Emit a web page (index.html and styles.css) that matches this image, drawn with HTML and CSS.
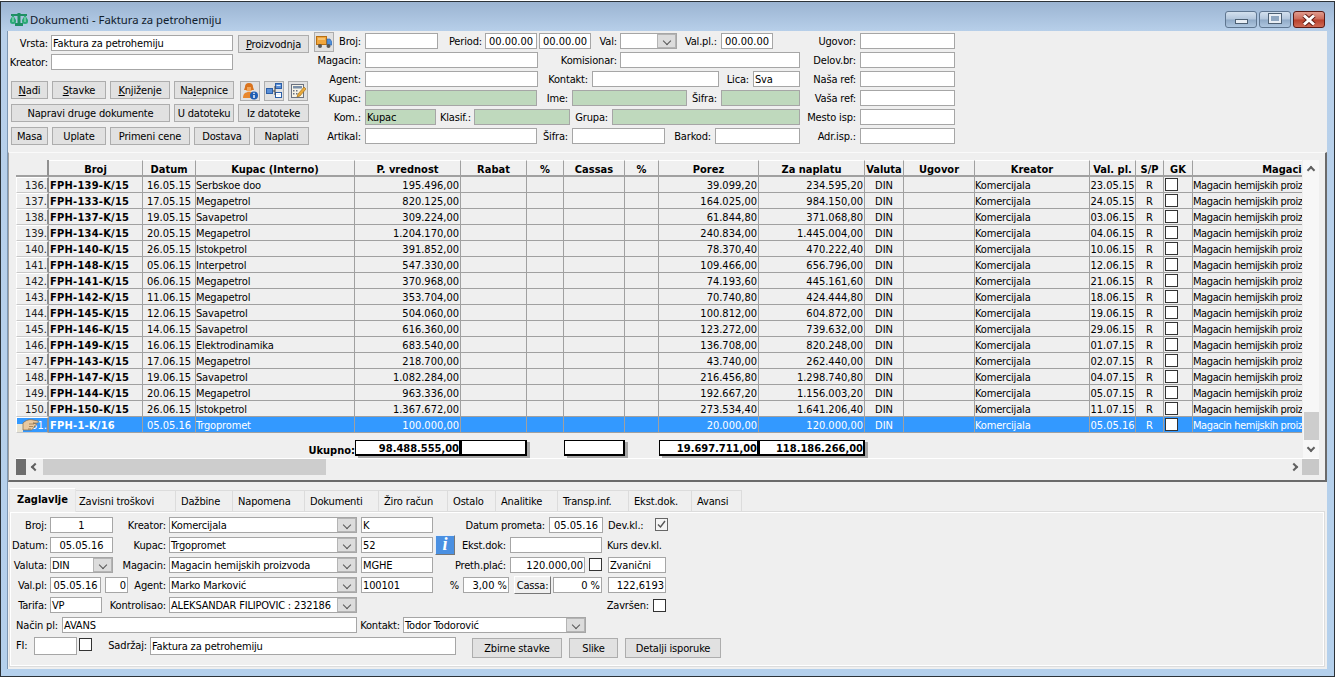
FILE: index.html
```html
<!DOCTYPE html>
<html lang="en">
<head>
    <meta charset="UTF-8">
    <title>Dokumenti - Faktura za petrohemiju</title>
    <link rel="stylesheet" href="styles.css">
</head>
<body>
<div class="window">
    <div class="titlebar">
        <svg class="app-icon" width="18" height="14" viewBox="0 0 18 14"><path d="M7.5 0h3v10h2.5v3H5v-3h2.5z" fill="#1f8f63"/><path d="M1 1h16v2H1z" fill="#1f8f63"/><path d="M0 7l3-5 3 5v1.5a3 2.5 0 0 1-6 0zM12 7l3-5 3 5v1.5a3 2.5 0 0 1-6 0z" fill="#2aa876"/><path d="M3 4v5M15 4v5" stroke="#a8e4c8"/></svg>
        <span class="title-text">Dokumenti - Faktura za petrohemiju</span>
        <div class="win-buttons">
            <div class="win-btn"><span class="glyph-min"></span></div>
            <div class="win-btn"><span class="glyph-max"></span></div>
            <div class="win-btn win-close"><svg width="16" height="12" viewBox="0 0 16 12"><path d="M3 1.5l10 9M13 1.5l-10 9" stroke="#5c1a14" stroke-width="4.8"/><path d="M3 1.5l10 9M13 1.5l-10 9" stroke="#fff" stroke-width="3"/></svg></div>
        </div>
    </div>

    <div class="client">
        <div class="top-panel">
            <div class="top-left">
                <div class="row tl-row"><div class="lbl lbl-near">Vrsta:</div><div class="field">Faktura za petrohemiju</div><div class="btn"><u>P</u>roizvodnja</div></div>
                <div class="row tl-row"><div class="lbl lbl-near">Kreator:</div><div class="field"></div></div>
                <div class="btn-row b1">
                    <div class="btn"><u>N</u>ađi</div><div class="btn"><u>S</u>tavke</div><div class="btn"><u>K</u>njiženje</div><div class="btn">Na<u>l</u>epnice</div>
                    <div class="btn icon-btn">
                        <svg width="16" height="17" viewBox="0 0 16 17"><circle cx="7" cy="5" r="3.6" fill="#f2a65a"/><path d="M3 4a4 4 0 0 1 8 0l1 3H9V4H5v3H2z" fill="#d9731d"/><path d="M1 15c0-4 2-6 6-6s6 2 6 6z" fill="#e8872c"/><circle cx="12" cy="12.5" r="4" fill="#1f5fb4"/><path d="M11.3 9.8h1.4v1.2h-1.4zM11.3 12h1.4v3h-1.4z" fill="#fff"/></svg>
                    </div>
                    <div class="btn icon-btn">
                        <svg width="16" height="16" viewBox="0 0 16 16"><rect x="0.5" y="5.5" width="6" height="5" fill="#5b8fd6" stroke="#2c5fa8"/><rect x="9.5" y="0.5" width="6" height="5" fill="#5b8fd6" stroke="#2c5fa8"/><rect x="9.5" y="9.5" width="6" height="5" fill="#fff" stroke="#2c5fa8"/><path d="M7 8h2M9 3v9" stroke="#444"/><path d="M10.5 2.5h4M10.5 11.5h4" stroke="#dfeaf8"/></svg>
                    </div>
                    <div class="btn icon-btn">
                        <svg width="16" height="16" viewBox="0 0 16 16"><rect x="1.5" y="1.5" width="12" height="13" fill="#f7f3e6" stroke="#6b7280"/><rect x="3" y="3" width="9" height="2.5" fill="#7b8fa8"/><path d="M3 7h1.5v1.5H3zM6 7h1.5v1.5H6zM3 10h1.5v1.5H3zM6 10h1.5v1.5H6z" fill="#6b7280"/><path d="M7 14l1-3 6-7 2 2-6 7z" fill="#e9a93a" stroke="#9a6a14" stroke-width="0.6"/></svg>
                    </div>
                </div>
                <div class="btn-row b2"><div class="btn">Napravi druge dokumente</div><div class="btn">U datoteku</div><div class="btn">Iz datoteke</div></div>
                <div class="btn-row b3"><div class="btn">Masa</div><div class="btn">Uplate</div><div class="btn">Primeni cene</div><div class="btn">Dostava</div><div class="btn">Naplati</div></div>
            </div>

            <div class="top-right">
                <div class="row f1">
                    <div class="btn truck-btn"><svg width="16" height="14" viewBox="0 0 16 14"><rect x="0.5" y="1.5" width="10" height="8" fill="#f0a63c" stroke="#b86f12"/><path d="M2 4h7" stroke="#fbe0a8"/><path d="M11 4h3l2 3v3h-5z" fill="#4f8fd8" stroke="#2c5fa8" stroke-width="0.6"/><circle cx="4" cy="11" r="2" fill="#555"/><circle cx="12.5" cy="11" r="2" fill="#555"/></svg></div>
                    <div class="lbl">Broj:</div><div class="field"></div>
                    <div class="lbl lbl-near">Period:</div><div class="field mid">00.00.00</div><div class="field mid period-to">00.00.00</div>
                    <div class="lbl lbl-near">Val:</div><div class="combo"><span class="combo-text"></span><b class="drop"></b></div>
                    <div class="lbl">Val.pl.:</div><div class="field mid">00.00.00</div>
                    <div class="lbl">Ugovor:</div><div class="field"></div>
                </div>
                <div class="row f2">
                    <div class="lbl">Magacin:</div><div class="field"></div>
                    <div class="lbl lbl-near">Komisionar:</div><div class="field"></div>
                    <div class="lbl">Delov.br:</div><div class="field"></div>
                </div>
                <div class="row f3">
                    <div class="lbl">Agent:</div><div class="field"></div>
                    <div class="lbl">Kontakt:</div><div class="field"></div>
                    <div class="lbl">Lica:</div><div class="field">Sva</div>
                    <div class="lbl">Naša ref:</div><div class="field"></div>
                </div>
                <div class="row f4">
                    <div class="lbl">Kupac:</div><div class="field green"></div>
                    <div class="lbl">Ime:</div><div class="field green"></div>
                    <div class="lbl">Šifra:</div><div class="field green"></div>
                    <div class="lbl">Vaša ref:</div><div class="field"></div>
                </div>
                <div class="row f5">
                    <div class="lbl">Kom.:</div><div class="field green">Kupac</div>
                    <div class="lbl lbl-near">Klasif.:</div><div class="field green"></div>
                    <div class="lbl">Grupa:</div><div class="field green"></div>
                    <div class="lbl">Mesto isp:</div><div class="field"></div>
                </div>
                <div class="row f6">
                    <div class="lbl">Artikal:</div><div class="field"></div>
                    <div class="lbl">Šifra:</div><div class="field"></div>
                    <div class="lbl">Barkod:</div><div class="field"></div>
                    <div class="lbl">Adr.isp.:</div><div class="field"></div>
                </div>
            </div>
        </div>

        <div class="grid-panel">
            <div class="grid-main">
                <div class="grid-left">
                    <div class="table-clip">
                        <table class="doc-table">
                            <colgroup>
                                <col class="c-num"><col class="c-broj"><col class="c-datum"><col class="c-kupac"><col class="c-pv"><col class="c-rabat"><col class="c-pct"><col class="c-cassas"><col class="c-pct2"><col class="c-porez"><col class="c-zn"><col class="c-val"><col class="c-ugovor"><col class="c-kreator"><col class="c-valpl"><col class="c-sp"><col class="c-gk"><col class="c-mag">
                            </colgroup>
                            <thead>
                                <tr><th class="rh"></th><th>Broj</th><th>Datum</th><th>Kupac (Interno)</th><th>P. vrednost</th><th>Rabat</th><th>%</th><th>Cassas</th><th>%</th><th>Porez</th><th>Za naplatu</th><th>Valuta</th><th>Ugovor</th><th>Kreator</th><th>Val. pl.</th><th>S/P</th><th>GK</th><th>Magacin</th></tr>
                            </thead>
                            <tbody>
                                <tr><td class="rh">136.</td><td class="bold">FPH-139-K/15</td><td class="mid">16.05.15</td><td>Serbskoe doo</td><td class="num">195.496,00</td><td></td><td></td><td></td><td></td><td class="num">39.099,20</td><td class="num">234.595,20</td><td class="mid">DIN</td><td></td><td>Komercijala</td><td class="mid">23.05.15</td><td class="mid">R</td><td class="chk-cell"><span class="check"></span></td><td>Magacin hemijskih proizvoda</td></tr>
                                <tr><td class="rh">137.</td><td class="bold">FPH-133-K/15</td><td class="mid">17.05.15</td><td>Megapetrol</td><td class="num">820.125,00</td><td></td><td></td><td></td><td></td><td class="num">164.025,00</td><td class="num">984.150,00</td><td class="mid">DIN</td><td></td><td>Komercijala</td><td class="mid">24.05.15</td><td class="mid">R</td><td class="chk-cell"><span class="check"></span></td><td>Magacin hemijskih proizvoda</td></tr>
                                <tr><td class="rh">138.</td><td class="bold">FPH-137-K/15</td><td class="mid">19.05.15</td><td>Savapetrol</td><td class="num">309.224,00</td><td></td><td></td><td></td><td></td><td class="num">61.844,80</td><td class="num">371.068,80</td><td class="mid">DIN</td><td></td><td>Komercijala</td><td class="mid">03.06.15</td><td class="mid">R</td><td class="chk-cell"><span class="check"></span></td><td>Magacin hemijskih proizvoda</td></tr>
                                <tr><td class="rh">139.</td><td class="bold">FPH-134-K/15</td><td class="mid">20.05.15</td><td>Megapetrol</td><td class="num">1.204.170,00</td><td></td><td></td><td></td><td></td><td class="num">240.834,00</td><td class="num">1.445.004,00</td><td class="mid">DIN</td><td></td><td>Komercijala</td><td class="mid">04.06.15</td><td class="mid">R</td><td class="chk-cell"><span class="check"></span></td><td>Magacin hemijskih proizvoda</td></tr>
                                <tr><td class="rh">140.</td><td class="bold">FPH-140-K/15</td><td class="mid">26.05.15</td><td>Istokpetrol</td><td class="num">391.852,00</td><td></td><td></td><td></td><td></td><td class="num">78.370,40</td><td class="num">470.222,40</td><td class="mid">DIN</td><td></td><td>Komercijala</td><td class="mid">10.06.15</td><td class="mid">R</td><td class="chk-cell"><span class="check"></span></td><td>Magacin hemijskih proizvoda</td></tr>
                                <tr><td class="rh">141.</td><td class="bold">FPH-148-K/15</td><td class="mid">05.06.15</td><td>Interpetrol</td><td class="num">547.330,00</td><td></td><td></td><td></td><td></td><td class="num">109.466,00</td><td class="num">656.796,00</td><td class="mid">DIN</td><td></td><td>Komercijala</td><td class="mid">12.06.15</td><td class="mid">R</td><td class="chk-cell"><span class="check"></span></td><td>Magacin hemijskih proizvoda</td></tr>
                                <tr><td class="rh">142.</td><td class="bold">FPH-141-K/15</td><td class="mid">06.06.15</td><td>Megapetrol</td><td class="num">370.968,00</td><td></td><td></td><td></td><td></td><td class="num">74.193,60</td><td class="num">445.161,60</td><td class="mid">DIN</td><td></td><td>Komercijala</td><td class="mid">21.06.15</td><td class="mid">R</td><td class="chk-cell"><span class="check"></span></td><td>Magacin hemijskih proizvoda</td></tr>
                                <tr><td class="rh">143.</td><td class="bold">FPH-142-K/15</td><td class="mid">11.06.15</td><td>Megapetrol</td><td class="num">353.704,00</td><td></td><td></td><td></td><td></td><td class="num">70.740,80</td><td class="num">424.444,80</td><td class="mid">DIN</td><td></td><td>Komercijala</td><td class="mid">18.06.15</td><td class="mid">R</td><td class="chk-cell"><span class="check"></span></td><td>Magacin hemijskih proizvoda</td></tr>
                                <tr><td class="rh">144.</td><td class="bold">FPH-145-K/15</td><td class="mid">12.06.15</td><td>Savapetrol</td><td class="num">504.060,00</td><td></td><td></td><td></td><td></td><td class="num">100.812,00</td><td class="num">604.872,00</td><td class="mid">DIN</td><td></td><td>Komercijala</td><td class="mid">19.06.15</td><td class="mid">R</td><td class="chk-cell"><span class="check"></span></td><td>Magacin hemijskih proizvoda</td></tr>
                                <tr><td class="rh">145.</td><td class="bold">FPH-146-K/15</td><td class="mid">14.06.15</td><td>Savapetrol</td><td class="num">616.360,00</td><td></td><td></td><td></td><td></td><td class="num">123.272,00</td><td class="num">739.632,00</td><td class="mid">DIN</td><td></td><td>Komercijala</td><td class="mid">29.06.15</td><td class="mid">R</td><td class="chk-cell"><span class="check"></span></td><td>Magacin hemijskih proizvoda</td></tr>
                                <tr><td class="rh">146.</td><td class="bold">FPH-149-K/15</td><td class="mid">16.06.15</td><td>Elektrodinamika</td><td class="num">683.540,00</td><td></td><td></td><td></td><td></td><td class="num">136.708,00</td><td class="num">820.248,00</td><td class="mid">DIN</td><td></td><td>Komercijala</td><td class="mid">01.07.15</td><td class="mid">R</td><td class="chk-cell"><span class="check"></span></td><td>Magacin hemijskih proizvoda</td></tr>
                                <tr><td class="rh">147.</td><td class="bold">FPH-143-K/15</td><td class="mid">17.06.15</td><td>Megapetrol</td><td class="num">218.700,00</td><td></td><td></td><td></td><td></td><td class="num">43.740,00</td><td class="num">262.440,00</td><td class="mid">DIN</td><td></td><td>Komercijala</td><td class="mid">02.07.15</td><td class="mid">R</td><td class="chk-cell"><span class="check"></span></td><td>Magacin hemijskih proizvoda</td></tr>
                                <tr><td class="rh">148.</td><td class="bold">FPH-147-K/15</td><td class="mid">19.06.15</td><td>Savapetrol</td><td class="num">1.082.284,00</td><td></td><td></td><td></td><td></td><td class="num">216.456,80</td><td class="num">1.298.740,80</td><td class="mid">DIN</td><td></td><td>Komercijala</td><td class="mid">04.07.15</td><td class="mid">R</td><td class="chk-cell"><span class="check"></span></td><td>Magacin hemijskih proizvoda</td></tr>
                                <tr><td class="rh">149.</td><td class="bold">FPH-144-K/15</td><td class="mid">20.06.15</td><td>Megapetrol</td><td class="num">963.336,00</td><td></td><td></td><td></td><td></td><td class="num">192.667,20</td><td class="num">1.156.003,20</td><td class="mid">DIN</td><td></td><td>Komercijala</td><td class="mid">05.07.15</td><td class="mid">R</td><td class="chk-cell"><span class="check"></span></td><td>Magacin hemijskih proizvoda</td></tr>
                                <tr><td class="rh">150.</td><td class="bold">FPH-150-K/15</td><td class="mid">26.06.15</td><td>Istokpetrol</td><td class="num">1.367.672,00</td><td></td><td></td><td></td><td></td><td class="num">273.534,40</td><td class="num">1.641.206,40</td><td class="mid">DIN</td><td></td><td>Komercijala</td><td class="mid">11.07.15</td><td class="mid">R</td><td class="chk-cell"><span class="check"></span></td><td>Magacin hemijskih proizvoda</td></tr>
                                <tr class="selected"><td class="rh">151.<svg class="hand" width="22" height="13" viewBox="0 0 22 13"><path d="M0 5h6v8H0z" fill="#e8e4d4"/><path d="M6 4c3-3 7-4 10-3l5 1c1 1 0 2-1 2h-4l3 1c1 1 0 2-1 2l-1 0c1 1 0 2-1 2 0 1-1 2-2 2H9L6 11z" fill="#e9c9a0" stroke="#8a6a44" stroke-width="0.7"/><path d="M12 5h5M12 7.5h4M11 10h3" stroke="#8a6a44" stroke-width="0.7"/></svg></td><td class="bold">FPH-1-K/16</td><td class="mid">05.05.16</td><td>Trgopromet</td><td class="num">100.000,00</td><td></td><td></td><td></td><td></td><td class="num">20.000,00</td><td class="num">120.000,00</td><td class="mid">DIN</td><td></td><td>Komercijala</td><td class="mid">05.05.16</td><td class="mid">R</td><td class="chk-cell"><span class="check"></span></td><td>Magacin hemijskih proizvoda</td></tr>
                            </tbody>
                        </table>
                    </div>
                    <div class="totals">
                        <div class="tot-label">Ukupno:</div>
                        <div class="tot-box">98.488.555,00</div>
                        <div class="tot-box"></div>
                        <div></div>
                        <div class="tot-box"></div>
                        <div></div>
                        <div class="tot-box">19.697.711,00</div>
                        <div class="tot-box">118.186.266,00</div>
                    </div>
                </div>
                <div class="vscroll">
                    <span class="arrow arrow-up"></span>
                    <div class="vspace"></div>
                    <div class="vthumb"></div>
                    <span class="arrow arrow-down"></span>
                </div>
            </div>
            <div class="hscroll">
                <div class="h-stub"></div>
                <div class="h-btn"><span class="arrow arrow-left"></span></div>
                <div class="h-thumb"></div>
                <div class="h-space"></div>
                <div class="h-btn"><span class="arrow arrow-right"></span></div>
                <div class="h-corner"></div>
            </div>
        </div>

        <div class="tabs">
            <div class="tab active">Zaglavlje</div>
            <div class="tab t-zav">Zavisni troškovi</div>
            <div class="tab t-daz">Dažbine</div>
            <div class="tab t-nap">Napomena</div>
            <div class="tab t-dok">Dokumenti</div>
            <div class="tab t-zir">Žiro račun</div>
            <div class="tab t-ost">Ostalo</div>
            <div class="tab t-ana">Analitike</div>
            <div class="tab t-tra">Transp.inf.</div>
            <div class="tab t-eks">Ekst.dok.</div>
            <div class="tab t-ava">Avansi</div>
        </div>

        <div class="tab-page">
            <div class="row z1">
                <div class="lbl lbl-near">Broj:</div><div class="field mid">1</div>
                <div class="lbl lbl-near">Kreator:</div><div class="combo"><span class="combo-text">Komercijala</span><b class="drop"></b></div>
                <span></span><div class="field">K</div>
                <div class="lbl">Datum prometa:</div><div class="field mid">05.05.16</div>
                <div class="lbl-left">Dev.kl.:</div><div class="check checked"><svg width="11" height="11" viewBox="0 0 11 11"><path d="M2 5.5l2.5 2.5L9 2" fill="none" stroke="#555" stroke-width="1.4"/></svg></div>
            </div>
            <div class="row z2">
                <div class="lbl lbl-near">Datum:</div><div class="field mid">05.05.16</div>
                <div class="lbl lbl-near">Kupac:</div><div class="combo"><span class="combo-text">Trgopromet</span><b class="drop"></b></div>
                <span></span><div class="field">52</div>
                <span></span><div class="info-btn">i</div>
                <div class="lbl">Ekst.dok:</div><div class="field"></div>
                <div class="lbl-left">Kurs dev.kl.</div>
            </div>
            <div class="row z3">
                <div class="lbl lbl-near">Valuta:</div><div class="combo"><span class="combo-text">DIN</span><b class="drop"></b></div>
                <div class="lbl lbl-near">Magacin:</div><div class="combo"><span class="combo-text">Magacin hemijskih proizvoda</span><b class="drop"></b></div>
                <span></span><div class="field">MGHE</div>
                <div class="lbl">Preth.plać:</div><div class="field num">120.000,00</div>
                <span></span><div class="check"></div>
                <span></span><div class="field">Zvanični</div>
            </div>
            <div class="row z4">
                <div class="lbl lbl-near">Val.pl:</div><div class="field mid">05.05.16</div>
                <span></span><div class="field num">0</div>
                <div class="lbl lbl-near">Agent:</div><div class="combo"><span class="combo-text">Marko Marković</span><b class="drop"></b></div>
                <span></span><div class="field">100101</div>
                <div class="lbl">%</div><div class="field num">3,00 %</div>
                <span></span><div class="btn raised">Cassa:</div>
                <span></span><div class="field num">0 %</div>
                <span></span><div class="field num">122,6193</div>
            </div>
            <div class="row z5">
                <div class="lbl lbl-near">Tarifa:</div><div class="field">VP</div>
                <div class="lbl lbl-near">Kontrolisao:</div><div class="combo"><span class="combo-text">ALEKSANDAR FILIPOVIC : 232186</span><b class="drop"></b></div>
                <div class="lbl">Završen:</div><div class="check low"></div>
            </div>
            <div class="row z6">
                <div class="lbl">Način pl:</div><div class="field">AVANS</div>
                <div class="lbl lbl-near">Kontakt:</div><div class="combo"><span class="combo-text">Todor Todorović</span><b class="drop"></b></div>
            </div>
            <div class="row z7">
                <div class="lbl lbl-left-f">FI:</div><div class="field tall"></div>
                <span></span><div class="check"></div>
                <div class="lbl lbl-near">Sadržaj:</div><div class="field tall">Faktura za petrohemiju</div>
                <span></span><div class="btn big">Zbirne stavke</div>
                <span></span><div class="btn big">Slike</div>
                <span></span><div class="btn big">Detalji isporuke</div>
            </div>
        </div>
    </div>
</div>
</body>
</html>
```

FILE: styles.css
```css
* {
    margin: 0;
    padding: 0;
    box-sizing: border-box;
}

body {
    font-family: "DejaVu Sans Condensed", "DejaVu Sans", sans-serif;
    font-size: 11px;
    letter-spacing: -0.16px;
    color: #000;
    background: #fff;
    width: 1335px;
    height: 677px;
    overflow: hidden;
    padding-top: 1px;
}

.window {
    width: 1335px;
    height: 676px;
    border: 1px solid #2b3238;
    background: linear-gradient(to bottom, #9bb4d2 0, #b8d0ea 30px, #b4d0ec 100%);
    padding: 0 7px 7px 6px;
    display: flex;
    flex-direction: column;
}

.titlebar {
    height: 29px;
    flex: none;
    display: flex;
    align-items: center;
    padding-left: 3px;
    position: relative;
}

.app-icon {
    margin-top: 6px;
    flex: none;
}

.title-text {
    font-family: "Noto Sans", sans-serif;
    font-size: 11.3px;
    letter-spacing: 0;
    margin-left: 2px;
    margin-top: 5px;
    color: #10202c;
}

.win-buttons {
    margin-left: auto;
    margin-right: 2px;
    margin-top: 6px;
    display: flex;
    gap: 2px;
}

.win-btn {
    width: 32px;
    height: 17px;
    border: 1px solid #5f7690;
    border-radius: 3px;
    background: linear-gradient(to bottom, #d3e0ee 0, #b2c6dc 48%, #8fa9c6 52%, #aec6df 100%);
    display: flex;
    align-items: center;
    justify-content: center;
}

.win-close {
    border-color: #5c1a14;
    background: linear-gradient(to bottom, #e09b8e 0, #cc6a58 48%, #b8402c 52%, #cf6a55 100%);
}

.glyph-min {
    width: 13px;
    height: 5px;
    margin-top: 4px;
    background: #e8eef5;
    border: 1px solid #4d6073;
}

.glyph-max {
    width: 12px;
    height: 9px;
    border: 2px solid #e8eef5;
    background: #8ea6c0;
    box-shadow: 0 0 0 1px #4d6073;
    margin-top: -2px;
}

.client {
    flex: 1;
    min-height: 0;
    background: #efefef;
    border-left: 1px solid #7d97b3;
    display: flex;
    flex-direction: column;
}

/* top filter panel */
.top-panel {
    height: 121px;
    flex: none;
    display: flex;
}

.top-left {
    width: 306px;
    padding-top: 4px;
    flex: none;
}

.top-right {
    padding-top: 2px;
}

.row {
    display: grid;
    height: 16px;
    margin-bottom: 3px;
    white-space: nowrap;
}

.lbl {
    text-align: right;
    padding-right: 4px;
    line-height: 17px;
}

.lbl-near {
    padding-right: 3px;
}

.lbl-left {
    padding-left: 5px;
    line-height: 17px;
}

.field {
    height: 16px;
    border: 1px solid #a6a6a6;
    background: #fff;
    line-height: 16px;
    padding: 0 1px;
    overflow: hidden;
    white-space: nowrap;
}

.field.green {
    background: #bfd9bd;
}

.field.mid {
    text-align: center;
    letter-spacing: 0;
}

.field.num {
    text-align: right;
    letter-spacing: 0;
}

.field.tall {
    height: 18px;
    line-height: 18px;
}

.period-to {
    margin-left: 2px;
}

.combo {
    height: 16px;
    border: 1px solid #a6a6a6;
    background: #fff;
    display: flex;
    line-height: 16px;
    overflow: hidden;
}

.combo-text {
    flex: 1;
    padding-left: 1px;
    white-space: nowrap;
    overflow: hidden;
}

.drop {
    width: 19px;
    flex: none;
    background: #dcdcdc;
    border: 1px solid #b4b4b4;
    position: relative;
}

.drop::after {
    content: "";
    position: absolute;
    left: 6px;
    top: 3px;
    width: 5px;
    height: 5px;
    border-right: 1px solid #555;
    border-bottom: 1px solid #555;
    transform: rotate(45deg);
}

.btn {
    height: 18px;
    border: 1px solid #adadad;
    background: #e1e1e1;
    text-align: center;
    line-height: 18px;
    white-space: nowrap;
}

.tl-row {
    grid-template-columns: 43px 182px 76px;
}

.tl-row .btn {
    margin-left: 5px;
}

.btn-row {
    display: grid;
    column-gap: 4px;
    height: 18px;
    margin-left: 3px;
    margin-bottom: 5px;
}

.b1 {
    grid-template-columns: 37px 54px 60px 60px 22px 20px 20px;
    margin-top: 11px;
}

.b2 {
    grid-template-columns: 159px 60px 71px;
}

.b3 {
    grid-template-columns: 37px 54px 80px 56px 55px;
}

.icon-btn {
    width: 20px;
    height: 20px;
    justify-self: end;
    display: flex;
    align-items: center;
    justify-content: center;
}

.truck-btn {
    width: 20px;
    height: 20px;
    margin-top: -1px;
    display: flex;
    align-items: center;
    justify-content: center;
}

.f1 { grid-template-columns: 20px 31px 73px 47px 52px 54px 29px 57px 44px 52px 87px 95px; }
.f2 { grid-template-columns: 51px 173px 82px 180px 60px 95px; }
.f3 { grid-template-columns: 51px 173px 54px 127px 34px 47px 60px 95px; }
.f4 { grid-template-columns: 51px 172px 35px 115px 34px 79px 60px 95px; }
.f5 { grid-template-columns: 51px 71px 38px 96px 42px 188px 60px 95px; }
.f6 { grid-template-columns: 51px 172px 35px 93px 50px 85px 60px 95px; }

/* document grid */
.grid-panel {
    flex: none;
    border-top: 1px solid #fafafa;
    border-left: 1px solid #a0a0a0;
    border-right: 2px solid #6a6a6a;
    border-bottom: 2px solid #6a6a6a;
    padding: 7px 5px 5px 7px;
}

.grid-main {
    display: flex;
    height: 298px;
}

.grid-left {
    width: 1286px;
    flex: none;
}

.table-clip {
    width: 1286px;
    height: 273px;
    overflow: hidden;
}

.doc-table {
    width: 1363px;
    table-layout: fixed;
    border-collapse: separate;
    border-spacing: 0;
}

.c-num { width: 33px; }
.c-broj { width: 94px; }
.c-datum { width: 53px; }
.c-kupac { width: 159px; }
.c-pv { width: 106px; }
.c-rabat { width: 66px; }
.c-pct { width: 37px; }
.c-cassas { width: 61px; }
.c-pct2 { width: 34px; }
.c-porez { width: 100px; }
.c-zn { width: 106px; }
.c-val { width: 39px; }
.c-ugovor { width: 71px; }
.c-kreator { width: 115px; }
.c-valpl { width: 46px; }
.c-sp { width: 28px; }
.c-gk { width: 29px; }
.c-mag { width: 186px; }

.doc-table th {
    height: 17px;
    font-weight: bold;
    letter-spacing: 0;
    text-align: center;
    background: #f0f0f0;
    border-top: 1px solid #fff;
    border-right: 1px solid #a0a0a0;
    border-bottom: 2px solid #a0a0a0;
    line-height: 11px;
    padding: 3px 0 0;
    white-space: nowrap;
    overflow: hidden;
}

.doc-table th.rh {
    background: #efefef;
    border-top: none;
    border-bottom: 2px solid #a0a0a0;
    border-right: 2px solid #909090;
}

.doc-table td {
    height: 16px;
    border-right: 1px solid #a0a0a0;
    border-bottom: 1px solid #a0a0a0;
    padding: 2px 1px 0 0;
    line-height: 13px;
    white-space: nowrap;
    overflow: hidden;
}

.doc-table td:last-child {
    letter-spacing: -0.42px;
}

.doc-table td.rh {
    text-align: right;
    padding: 1px 0 0;
    background: #efefef;
    color: #222;
    letter-spacing: 0;
    border-top: 1px solid #fff;
    border-left: 1px solid #fff;
    border-right: 2px solid #909090;
    border-bottom: 1px solid #c8c8c8;
    position: relative;
    line-height: 13px;
}

.doc-table td.bold {
    font-weight: bold;
    letter-spacing: 0.25px;
    padding-left: 1px;
}

.doc-table td.mid {
    text-align: center;
    letter-spacing: 0;
    padding-right: 0;
}

.doc-table td.num {
    text-align: right;
    letter-spacing: 0;
}

.doc-table td.chk-cell {
    vertical-align: top;
    padding: 0;
}

.check {
    display: block;
    width: 13px;
    height: 13px;
    background: #fff;
    border: 1px solid #333;
    margin-top: 1px;
}

.chk-cell .check {
    margin: 1px 0 0 1px;
}

.check.checked {
    border-color: #666;
    display: flex;
    align-items: center;
    justify-content: center;
    background: #f4f4f4;
}

.check.low {
    margin-top: 2px;
}

.selected td {
    background: #3399ff;
    color: #fff;
}

.doc-table .selected td.rh {
    background: #3399ff;
    color: #fff;
}

.hand {
    position: absolute;
    left: 0;
    top: 1px;
}

.totals {
    display: grid;
    grid-template-columns: 339px 106px 66px 37px 61px 34px 100px 106px;
    height: 16px;
    margin-top: 7px;
    font-weight: bold;
    letter-spacing: 0;
}

.tot-label {
    text-align: right;
    line-height: 21px;
    white-space: nowrap;
}

.tot-box {
    height: 16px;
    background: #fff;
    border: 1px solid #000;
    border-right-width: 2px;
    border-bottom-width: 2px;
    box-shadow: 3px 2px 0 #a8a8a8;
    text-align: right;
    line-height: 15px;
    white-space: nowrap;
}

.vscroll {
    width: 16px;
    margin-left: 1px;
    background: #f7f7f7;
    display: flex;
    flex-direction: column;
    align-items: center;
    flex: none;
}

.vspace {
    flex: 1;
}

.vthumb {
    width: 15px;
    height: 28px;
    background: #cdcdcd;
}

.arrow {
    display: block;
    width: 6px;
    height: 6px;
    border-top: 2px solid #606060;
    border-left: 2px solid #606060;
    flex: none;
}

.arrow-up {
    transform: rotate(45deg);
    margin-top: 7px;
}

.arrow-down {
    transform: rotate(225deg);
    margin: 5px 0 7px;
}

.arrow-left {
    transform: rotate(-45deg);
}

.arrow-right {
    transform: rotate(135deg);
}

.hscroll {
    display: flex;
    height: 17px;
    width: 1303px;
    border-top: 1px solid #fff;
    align-items: stretch;
}

.h-stub {
    width: 10px;
    background: #6e6e6e;
}

.h-btn {
    width: 17px;
    display: flex;
    align-items: center;
    justify-content: center;
}

.h-thumb {
    width: 283px;
    background: #cdcdcd;
}

.h-space {
    flex: 1;
}

.h-corner {
    width: 17px;
    background: #c8c8c8;
}

/* tabs */
.tabs {
    display: flex;
    align-items: flex-end;
    height: 24px;
    margin-top: 5px;
    margin-left: 1px;
    flex: none;
    position: relative;
}

.tab {
    height: 21px;
    padding-left: 5px;
    line-height: 22px;
    border: 1px solid #dcdcdc;
    border-left: none;
    border-bottom: none;
    white-space: nowrap;
}

.tab.active {
    width: 67px;
    height: 24px;
    margin-bottom: -1px;
    font-weight: bold;
    letter-spacing: 0;
    background: #efefef;
    border: none;
    border-top: 1px solid #fff;
    border-left: 1px solid #e4e4e4;
    border-right: 1px solid #e4e4e4;
    padding-left: 7px;
    position: relative;
    z-index: 1;
    line-height: 22px;
}

.t-zav { width: 100px; padding-left: 3px; }
.t-daz { width: 57px; }
.t-nap { width: 72px; }
.t-dok { width: 74px; }
.t-zir { width: 69px; }
.t-ost { width: 48px; }
.t-ana { width: 62px; }
.t-tra { width: 71px; }
.t-eks { width: 63px; }
.t-ava { width: 50px; }

.tab-page {
    height: 156px;
    flex: none;
    margin-left: 1px;
    margin-right: 2px;
    border: 1px solid #dcdcdc;
    box-shadow: inset 0 0 0 1px #fff;
    padding: 5px 0 0 2px;
}

.tab-page .row {
    margin-bottom: 4px;
}

.z1 { grid-template-columns: 38px 63px 56px 188px 4px 72px 116px 54px 52px 13px; }
.z2 { grid-template-columns: 38px 63px 56px 188px 4px 72px 2px 20px 55px 92px 70px; }
.z3 { grid-template-columns: 38px 63px 56px 188px 4px 72px 77px 75px 4px 13px 6px 58px; }
.z4 { grid-template-columns: 38px 51px 4px 23px 41px 188px 4px 72px 30px 46px 5px 37px 2px 49px 6px 58px; }
.z5 { grid-template-columns: 38px 52px 67px 188px 296px 13px; }
.z6 { grid-template-columns: 50px 295px 46px 183px; }
.z7 { grid-template-columns: 22px 43px 2px 13px 58px 306px 16px 90px 7px 49px 7px 96px; height: 20px; }

.lbl-left-f {
    text-align: left;
    padding-left: 4px;
}

.info-btn {
    width: 20px;
    height: 20px;
    margin-top: -2px;
    background: #4a90e2;
    border: 1px solid #e6eef8;
    border-right-color: #777;
    border-bottom-color: #777;
    color: #fff;
    font-family: "Liberation Serif", serif;
    font-weight: bold;
    font-style: italic;
    font-size: 18px;
    line-height: 17px;
    text-align: center;
}

.raised {
    height: 18px;
    margin-top: -1px;
    background: #f0f0f0;
    border: 1px solid #fff;
    border-right-color: #777;
    border-bottom-color: #777;
}

.big {
    height: 20px;
    line-height: 20px;
    margin-top: 1px;
}
```
